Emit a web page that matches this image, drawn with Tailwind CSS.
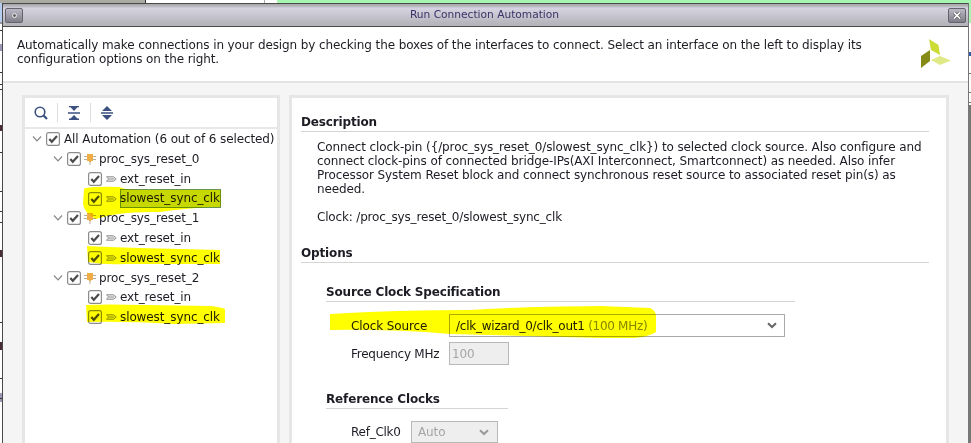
<!DOCTYPE html>
<html lang="en">
<head>
<meta charset="utf-8">
<title>Run Connection Automation</title>
<script src="https://cdn.jsdelivr.net/npm/@tailwindcss/browser@4"></script>
</head>
<body class="w-[971px] h-[443px] overflow-hidden bg-white font-['DejaVu_Sans',sans-serif] text-[12px] tracking-[-0.105px] text-[#1c1c24]">
<svg width="0" height="0" class="absolute">
  <defs>
    <symbol id="chev" viewBox="0 0 10 8"><path d="M1 1.500 5 5.800 9 1.500" fill="none" stroke="#888" stroke-width="1.200"/></symbol>
    <symbol id="check" viewBox="0 0 14 14"><rect x=".6" y=".6" width="12.800" height="12.800" rx="2" fill="#fff" stroke="#8c8c8c" stroke-width="1.200"/><path d="M3.300 7 5.800 9.800 11 4" fill="none" stroke="#4c4c4c" stroke-width="2.200"/></symbol>
    <symbol id="chip" viewBox="0 0 12 12"><path d="M0 3.500H12M0 6.500H12M6 8V12" stroke="#b5ada2" stroke-width="1"/><path d="M3 1H9V8H7.500L6 9.500 4.500 8H3Z" fill="#f0ad45"/></symbol>
    <symbol id="port" viewBox="0 0 11 6"><path d="M.5 .7H7.500L10.300 3 7.500 5.300H.5L2.500 3Z" fill="#ddd" stroke="#999" stroke-width="1"/><path d="M2.500 3H8" stroke="#999" stroke-width=".8"/></symbol>
  </defs>
</svg>
<div class="relative w-[971px] h-[443px] flex flex-col">
  <div class="flex h-[3px] shrink-0">
    <div class="w-[145px] bg-[#aaa9a2]"></div><div class="w-px bg-[#333]"></div><div class="w-[118px] bg-white"></div><div class="w-px bg-[#aaa]"></div><div class="w-[12px] bg-white"></div><div class="flex-1 bg-[#a6f5b0]"></div>
  </div>
  <div class="flex flex-1 min-h-0">
    <svg class="shrink-0" width="2" height="440"><path d="M0 0H2V19H0Z" fill="#b5cdf0"/><path d="M0 41H2V48H0ZM0 390H2V399H0Z" fill="#9d96b5"/><path d="M0 122H2V128H0ZM0 247H2V254H0ZM0 339H2V347H0Z" fill="#4a2c35"/><path d="M0 20H2M0 27.500H2M0 69.500H2M0 81.500H2M0 86.500H2M0 149.500H2M0 188.500H2M0 208.500H2M0 219.500H2M0 319.500H2M0 375.500H2M0 395.500H2" stroke="#333"/></svg>
    <main class="flex flex-col w-[967px] shrink-0 border-x border-t border-[#4a4a4a] border-r-[#777] bg-[#f5f5f5]">
      <div class="flex items-center justify-between h-[23px] shrink-0 px-[2px] border-b border-[#4a4a44] bg-linear-to-b from-[#aaa9ac] from-4% via-[#d4d3e0] via-20% to-[#b7b5bb] to-90%">
        <div class="flex items-center justify-center w-[18px] h-[15px] rounded-[2px] border border-[#66636f] bg-linear-to-b from-[#bbb9c5] to-[#807e89]"><div class="size-[5px] rounded-full border border-[#eee] bg-[#666]"></div></div>
        <div class="text-[10.67px] tracking-[-0.02px] text-[#3a3268] leading-[14px] whitespace-nowrap mr-[2px]">Run Connection Automation</div>
        <div class="flex items-center justify-center w-[18px] h-[15px] rounded-[2px] border border-[#66636f] bg-linear-to-b from-[#bbb9c5] to-[#807e89]"><svg width="8" height="7" viewBox="0 0 8 7"><path d="M1 .5 7 6.500M7 .5 1 6.500" stroke="#555" stroke-width="3"/><path d="M1 .5 7 6.500M7 .5 1 6.500" stroke="#fff" stroke-width="1.700"/></svg></div>
      </div>
      <header class="flex justify-between h-[56px] shrink-0 bg-white border-b-2 border-[#e3e3e3] pl-[14px] pr-[15px] pt-[11px]">
        <div class="leading-[14px] whitespace-nowrap"><p>Automatically make connections in your design by checking the boxes of the interfaces to connect. Select an interface on the left to display its</p><p>configuration options on the right.</p></div>
        <svg class="shrink-0" width="32" height="31" viewBox="0 0 32 31"><path d="M8 1 17.500 7 19 17 10 12Z" fill="#cbdc35"/><path d="M0 18 9 12V23L0 30Z" fill="#858b16"/><path d="M10 22 19 18 30 22.500 19 27Z" fill="#dfe987"/></svg>
      </header>
      <div class="flex gap-[9px] flex-1 pl-[19px] pt-[12px] min-h-0">
        <aside class="w-[258px] shrink-0 border-[3px] border-b-0 border-[#e6e6e6] bg-white">
          <div class="flex items-center h-[31px] border-b-2 border-[#e8e8e8] pl-[9px]">
            <svg width="14" height="14" viewBox="0 0 14 14" fill="none" stroke="#3b5080"><circle cx="6" cy="6" r="4.800" stroke-width="1.600"/><path d="M9.300 9.300 13 13" stroke-width="2.200"/></svg>
            <div class="w-px h-[19px] bg-[#ddd] ml-[9px] mr-[10px]"></div>
            <svg width="12" height="14" viewBox="0 0 12 14" fill="#3b5080"><path d="M1 0H11V1.300H9.500L6 5 2.500 1.300H1ZM0 6.200H12V7.800H0ZM6 9 9.500 12.600H11V14H1V12.600H2.500Z"/></svg>
            <div class="w-px h-[19px] bg-[#ddd] ml-[10px] mr-[10px]"></div>
            <svg width="12" height="14" viewBox="0 0 12 14" fill="#3b5080"><path d="M6 0 11 5H1ZM0 6.200H12V7.800H0ZM1 9H11L6 14Z"/></svg>
          </div>
          <div class="flex flex-col whitespace-nowrap leading-[16px] pt-[0.4px]">
            <div class="flex items-center h-[19.75px] pl-[7px]"><svg width="10" height="8"><use href="#chev"/></svg><svg class="ml-[4px] mr-[4px] shrink-0" width="14" height="14"><use href="#check"/></svg><span>All Automation (6 out of 6 selected)</span></div>
            <div class="flex items-center h-[19.75px] pl-[28px]"><svg width="10" height="8"><use href="#chev"/></svg><svg class="ml-[4px] mr-[3px]" width="14" height="14"><use href="#check"/></svg><svg class="mr-[3px]" width="12" height="12"><use href="#chip"/></svg><span>proc_sys_reset_0</span></div>
            <div class="flex items-center h-[19.75px] pl-[63px]"><svg class="mr-[4px]" width="14" height="14"><use href="#check"/></svg><svg class="mr-[3px]" width="11" height="6"><use href="#port"/></svg><span>ext_reset_in</span></div>
            <div class="flex items-center h-[19.75px] pl-[63px]"><svg class="mr-[4px]" width="14" height="14"><use href="#check"/></svg><svg class="mr-[3px]" width="11" height="6"><use href="#port"/></svg><span class="w-[101px] h-[19px] leading-[17px] border border-[#6a9250] bg-[#c6d800] -indent-px">slowest_sync_clk</span></div>
            <div class="flex items-center h-[19.75px] pl-[28px]"><svg width="10" height="8"><use href="#chev"/></svg><svg class="ml-[4px] mr-[3px]" width="14" height="14"><use href="#check"/></svg><svg class="mr-[3px]" width="12" height="12"><use href="#chip"/></svg><span>proc_sys_reset_1</span></div>
            <div class="flex items-center h-[19.75px] pl-[63px]"><svg class="mr-[4px]" width="14" height="14"><use href="#check"/></svg><svg class="mr-[3px]" width="11" height="6"><use href="#port"/></svg><span>ext_reset_in</span></div>
            <div class="flex items-center h-[19.75px] pl-[63px]"><svg class="mr-[4px]" width="14" height="14"><use href="#check"/></svg><svg class="mr-[3px]" width="11" height="6"><use href="#port"/></svg><span>slowest_sync_clk</span></div>
            <div class="flex items-center h-[19.75px] pl-[28px]"><svg width="10" height="8"><use href="#chev"/></svg><svg class="ml-[4px] mr-[3px]" width="14" height="14"><use href="#check"/></svg><svg class="mr-[3px]" width="12" height="12"><use href="#chip"/></svg><span>proc_sys_reset_2</span></div>
            <div class="flex items-center h-[19.75px] pl-[63px]"><svg class="mr-[4px]" width="14" height="14"><use href="#check"/></svg><svg class="mr-[3px]" width="11" height="6"><use href="#port"/></svg><span>ext_reset_in</span></div>
            <div class="flex items-center h-[19.75px] pl-[63px]"><svg class="mr-[4px]" width="14" height="14"><use href="#check"/></svg><svg class="mr-[3px]" width="11" height="6"><use href="#port"/></svg><span>slowest_sync_clk</span></div>
          </div>
        </aside>
        <section class="w-[660px] shrink-0 border-[3px] border-b-0 border-[#e6e6e6] bg-white pl-[9px] pr-[17px] pt-[16px] whitespace-nowrap">
          <h2 class="h-[18px] leading-[16px] font-bold tracking-[-0.15px] border-b border-[#d4d4d4]">Description</h2>
          <div class="pl-[16px] pt-[8px] leading-[14.1px] h-[95px]">
            <p>Connect clock-pin ({/proc_sys_reset_0/slowest_sync_clk}) to selected clock source. Also configure and</p>
            <p>connect clock-pins of connected bridge-IPs(AXI Interconnect, Smartconnect) as needed. Also infer</p>
            <p>Processor System Reset block and connect synchronous reset source to associated reset pin(s) as</p>
            <p>needed.</p>
            <p class="mt-[14px] tracking-[-0.17px]">Clock: /proc_sys_reset_0/slowest_sync_clk</p>
          </div>
          <h2 class="mt-[18px] h-[18px] leading-[16px] font-bold tracking-[-0.15px] border-b border-[#d4d4d4]">Options</h2>
          <div class="pl-[25px]">
            <h3 class="mt-[21px] w-[469px] h-[18px] leading-[17px] font-bold tracking-[-0.18px] border-b border-[#d4d4d4]">Source Clock Specification</h3>
            <div class="flex items-center mt-[12px] pl-[25px]"><span class="w-[98px]">Clock Source</span><div class="flex items-center justify-between w-[336px] h-[23px] border border-[#aaa] pl-[6px] pr-[7px]"><span class="tracking-[-0.24px]">/clk_wizard_0/clk_out1 <span class="text-[#858585] tracking-[-0.3px]">(100 MHz)</span></span><svg width="10" height="7" viewBox="0 0 10 7"><path d="M1 1.200 5 5 9 1.200" fill="none" stroke="#666" stroke-width="2"/></svg></div></div>
            <div class="flex items-center mt-[5px] pl-[25px]"><span class="w-[98px] tracking-[-0.25px]">Frequency MHz</span><div class="flex items-center w-[60px] h-[23px] border border-[#b8b8b8] bg-[#eee] pl-[2px] text-[#a5a5a5]">100</div></div>
            <h3 class="mt-[26px] w-[182px] h-[18px] leading-[16px] font-bold tracking-[-0.15px] border-b border-[#d4d4d4]">Reference Clocks</h3>
            <div class="flex items-center mt-[12px] pl-[25px]"><span class="w-[60px] tracking-[-0.25px]">Ref_Clk0</span><div class="flex items-center justify-between w-[87px] h-[22px] border border-[#b8b8b8] bg-[#eee] pl-[6px] pr-[8px] text-[#a5a5a5]"><span>Auto</span><svg width="10" height="7" viewBox="0 0 10 7"><path d="M1 1.200 5 5 9 1.200" fill="none" stroke="#999" stroke-width="2"/></svg></div></div>
          </div>
        </section>
      </div>
    </main>
    <svg class="shrink-0" width="2" height="440"><path d="M0 0H2V20H0Z" fill="#a6f5b0"/><path d="M0 49H2V53H0Z" fill="#315ca5"/><path d="M0 70.500H2M0 89.500H2M0 99.500H2" stroke="#777"/><path d="M0 102H2V440H0Z" fill="#777"/></svg>
  </div>
  <svg class="absolute inset-0 mix-blend-multiply pointer-events-none" width="971" height="443" fill="#ffff00">
    <path d="M84 189Q87 186 119 187Q125 190 140 190H221V206Q180 209 160 212Q120 211 96 219Q84 213 83 204Z"/>
    <path d="M87 246Q105 247 140 248L220 250V264H125Q105 265 88 262Z"/>
    <path d="M86 305Q105 304 145 305L210 306Q220 307 225 309V323L175 324Q125 321 87 322Z"/>
    <path d="M330 314Q395 310 470 310Q510 307 600 306L650 308Q655 310 656 315V332Q648 337 635 338H600L450 334Q390 329 330 330Z"/>
  </svg>
</div>
</body>
</html>
